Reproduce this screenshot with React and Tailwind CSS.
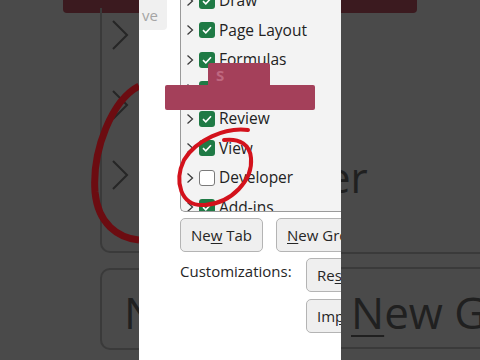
import React from "react";

const font = { fontFamily: '"Open Sans", "Noto Sans", sans-serif' };

function Chevron({ className = "" }) {
  return (
    <svg width="8" height="12" viewBox="0 0 8 12" className={className}>
      <path d="M1.5 1.5 L6.5 6 L1.5 10.5" fill="none" stroke="#3b3b3b" strokeWidth="1.3" />
    </svg>
  );
}

function Check({ on }) {
  if (!on) {
    return <div className="w-[16px] h-[16px] rounded-[3px] border border-[#7a7a7a] bg-white shrink-0" />;
  }
  return (
    <div className="w-[16px] h-[16px] rounded-[3px] bg-[#1f7a45] flex items-center justify-center shrink-0">
      <svg width="10" height="8" viewBox="0 0 10 8">
        <path d="M1 4.2 L3.8 6.8 L9 1.2" fill="none" stroke="white" strokeWidth="1.6" />
      </svg>
    </div>
  );
}

const tabs = [
  ["Draw", true],
  ["Page Layout", true],
  ["Formulas", true],
  ["Data", true],
  ["Review", true],
  ["View", true],
  ["Developer", false],
  ["Add-ins", true],
];

function Btn({ children, className = "" }) {
  return (
    <div
      className={
        "h-[34px] rounded-[5px] border border-[#b4b4b4] bg-[#efefef] flex items-center text-[15px] text-[#262626] whitespace-nowrap " +
        className
      }
    >
      {children}
    </div>
  );
}

function LeftSide() {
  return (
    <div className="relative w-[139px] h-full bg-[#4a4a4a] overflow-hidden shrink-0">
      <div className="absolute left-[63px] top-0 w-[100px] h-[13px] bg-[#3b1a1f] rounded-bl-[4px]" />
      <div className="absolute left-[100px] top-[8px] w-[60px] h-[245px] border-l-2 border-b-2 border-[#3a3a3a] rounded-bl-[10px]" />
      <svg className="absolute left-0 top-0" width="139" height="360">
        <path d="M113 21 L127 35 L113 49" fill="none" stroke="#262626" strokeWidth="2" />
        <path d="M113 91 L127 105 L113 119" fill="none" stroke="#262626" strokeWidth="2" />
        <path d="M113 161 L127 175 L113 189" fill="none" stroke="#262626" strokeWidth="2" />
        <path d="M139 86 C112 100 92 150 95 192 C98 224 118 238 139 240" fill="none" stroke="#6c0c11" strokeWidth="7" />
      </svg>
      <div className="absolute left-[100px] top-[268px] w-[80px] h-[82px] border-2 border-[#3a3a3a] rounded-[10px]" />
      <div className="absolute left-[124px] top-[290px] text-[44px] leading-none text-[#202020]" style={font}>
        N
      </div>
    </div>
  );
}

function RightSide() {
  return (
    <div className="relative w-[139px] h-full bg-[#4a4a4a] overflow-hidden shrink-0">
      <div className="absolute left-0 top-0 w-[76px] h-[13px] bg-[#3b1a1f] rounded-br-[4px]" />
      <div className="absolute left-[-14px] top-[156px] text-[42px] leading-none text-[#202020]" style={font}>
        er
      </div>
      <div className="absolute left-0 top-[252px] w-full h-[2px] bg-[#3a3a3a]" />
      <div className="absolute left-0 top-[267px] w-full h-[2px] bg-[#3a3a3a]" />
      <div className="absolute left-0 top-[347px] w-full h-[2px] bg-[#3a3a3a]" />
      <div className="absolute left-[10px] top-[290px] text-[44px] leading-none text-[#202020] whitespace-nowrap" style={font}>
        <span className="underline underline-offset-[6px] decoration-2">N</span>ew Gr
      </div>
    </div>
  );
}

function Center() {
  return (
    <div className="relative w-[202px] h-full bg-white overflow-hidden shrink-0" style={font}>
      <div className="flex items-start">
        <div className="w-[28px] h-[30px] bg-[#f0f0f0] rounded-br-[4px] flex items-center pl-[3px] text-[15px] text-[#a5a5a5] shrink-0">
          ve
        </div>
        <div className="ml-[13px] w-[180px] h-[212px] border-l border-b border-[#9a9a9a] rounded-bl-[5px] bg-[#f3f3f3] overflow-hidden shrink-0">
          <div className="-mt-[14px]">
            {tabs.map(([name, on]) => (
              <div key={name} className="h-[29.5px] flex items-center text-[15.5px] text-[#222]">
                <Chevron className="ml-[5px] shrink-0" />
                <div className="ml-[5px]">
                  <Check on={on} />
                </div>
                <span className="ml-[4px] whitespace-nowrap">{name}</span>
              </div>
            ))}
          </div>
        </div>
      </div>
      <div className="flex mt-[6px] ml-[41px] gap-[13px]">
        <Btn className="w-[83px] justify-center shrink-0">
          <span>
            Ne<span className="underline underline-offset-2">w</span> Tab
          </span>
        </Btn>
        <Btn className="w-[90px] pl-[10px] shrink-0">
          <span>
            <span className="underline underline-offset-2">N</span>ew Group
          </span>
        </Btn>
      </div>
      <div className="flex mt-[6px] ml-[41px]">
        <div className="text-[15px] text-[#262626] leading-none pt-[6px] w-[126px] shrink-0">Customizations:</div>
        <div className="flex flex-col gap-[7px]">
          <Btn className="w-[60px] pl-[10px] h-[33px]">
            <span>
              Re<span className="underline underline-offset-2">s</span>et
            </span>
          </Btn>
          <Btn className="w-[60px] pl-[10px] h-[34px]">
            <span>
              Im<span className="underline underline-offset-2">p</span>ort
            </span>
          </Btn>
        </div>
      </div>

      {/* title overlay */}
      <div className="absolute left-[69px] top-[63px] w-[62px] h-[24px] bg-[#a4405a] rounded-t-[2px] pl-[8px] text-[15px] font-bold text-[#bf6880] leading-[24px]">
        S
      </div>
      <div className="absolute left-[26px] top-[85px] w-[150px] h-[25px] bg-[#a4405a] rounded-[2px]" />

      {/* red marker circle */}
      <svg className="absolute left-0 top-0 pointer-events-none" width="202" height="360">
        <path
          d="M109 130 C86 127 57 140 45 160 C35 181 41 207 66 205 C93 203 114 180 112 158 C111 145 101 138 85 140"
          fill="none"
          stroke="#d3121c"
          strokeWidth="4"
          strokeLinecap="round"
        />
      </svg>
    </div>
  );
}

export default function App() {
  return (
    <div className="w-[480px] h-[360px] flex overflow-hidden bg-[#4a4a4a]">
      <LeftSide />
      <Center />
      <RightSide />
    </div>
  );
}
